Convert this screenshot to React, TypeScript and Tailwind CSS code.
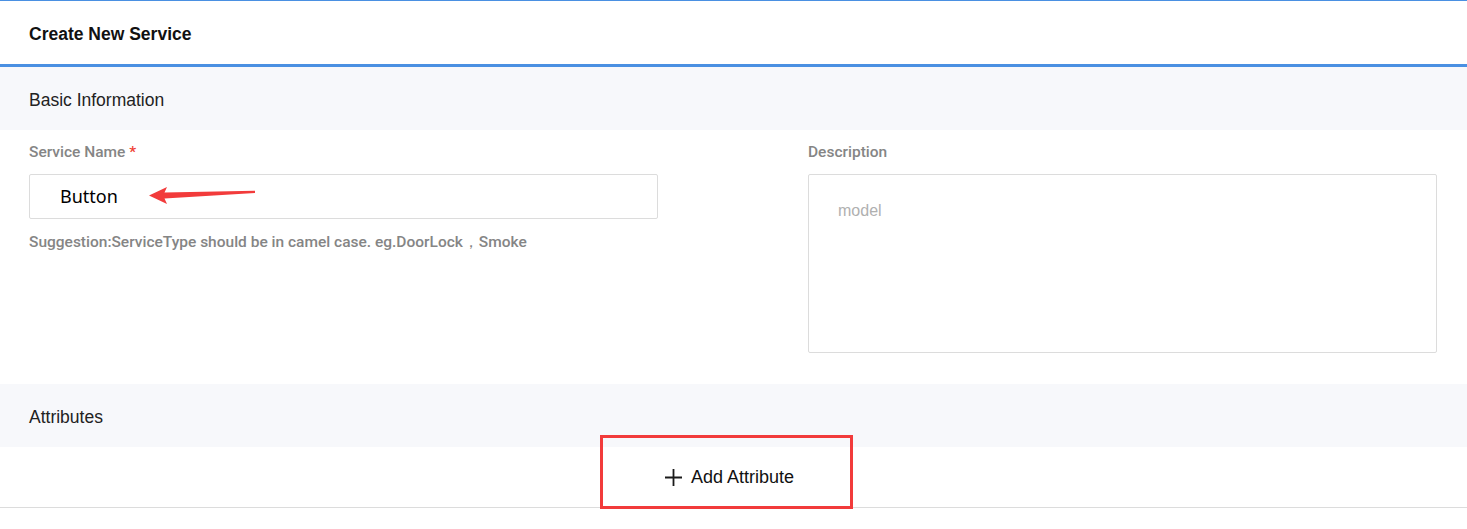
const sans = { fontFamily: '"Liberation Sans", Arial, sans-serif' };
const label = { fontFamily: 'Roboto, "Liberation Sans", sans-serif' };

function RedArrow() {
  return (
    <svg width="110" height="20" viewBox="0 0 110 20" className="absolute left-[148px] top-[185px]">
      <path d="M1 9.5 L19 1 L16.5 6.5 L107 4.8 L107 7 L16.5 12.5 L19 18 Z" fill="#f23b3b" />
    </svg>
  );
}

function PlusIcon() {
  return (
    <svg width="17" height="17" viewBox="0 0 17 17">
      <path d="M8.5 0 V17 M0 8.5 H17" stroke="#1a1a1a" strokeWidth="1.8" />
    </svg>
  );
}

export default function App() {
  return (
    <div className="relative w-[1467px] h-[529px] bg-white border-t border-[#4a90e2]" style={sans}>
      {/* Header */}
      <div className="h-[66px] flex items-center px-[29px] pt-[3px] border-b-[3px] border-[#4a90e2]">
        <h1 className="text-[17.5px] font-bold text-[#111]">Create New Service</h1>
      </div>

      {/* Basic Information */}
      <div className="h-[63px] bg-[#f7f8fb] flex items-center px-[29px] pt-[3px]">
        <span className="text-[17.5px] text-[#222]">Basic Information</span>
      </div>

      <div className="grid grid-cols-2 gap-[150px] pl-[29px] pr-[30px] pt-[13px] pb-[31px]">
        <div>
          <label className="block text-[15.5px] font-medium text-[#858585] leading-[18px]" style={label}>
            Service Name <span className="text-[#f04134]">*</span>
          </label>
          <div className="mt-[13px] h-[45px] border border-[#dcdcdc] rounded-[2px] flex items-center pl-[30px]">
            <span className="text-[18px] text-black" style={{ fontFamily: '"Noto Sans", "Open Sans", sans-serif' }}>Button</span>
          </div>
          <p className="mt-[14px] text-[15.5px] font-medium text-[#858585] leading-[18px]" style={label}>
            Suggestion:ServiceType should be in camel case. eg.DoorLock，Smoke
          </p>
        </div>
        <div>
          <label className="block text-[15.5px] font-medium text-[#858585] leading-[18px]" style={label}>Description</label>
          <div className="mt-[13px] h-[179px] border border-[#dcdcdc] rounded-[2px] pl-[29px] pt-[24px]">
            <span className="text-[16px] text-[#b0b0b0]">model</span>
          </div>
        </div>
      </div>

      {/* Attributes */}
      <div className="h-[63px] bg-[#f7f8fb] flex items-center px-[29px] pt-[3px]">
        <span className="text-[17.5px] text-[#222]">Attributes</span>
      </div>

      <div className="h-[61px] border-b border-[#dcdcdc] flex items-center justify-center pr-[8px]">
        <button className="flex items-center gap-[9px] text-[18px] text-[#111]">
          <PlusIcon />
          Add Attribute
        </button>
      </div>

      <RedArrow />
      <div className="absolute left-[600px] top-[434px] w-[253px] h-[74px] border-[3px] border-[#f23b3b]" />
    </div>
  );
}
